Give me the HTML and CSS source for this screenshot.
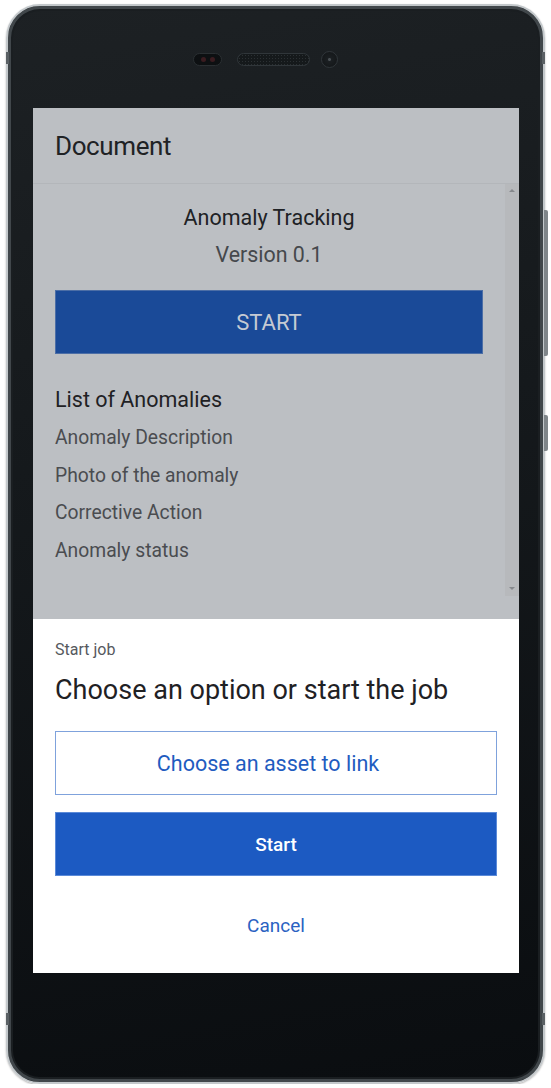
FILE: index.html
```html
<!DOCTYPE html>
<html lang="en">
<head>
  <meta charset="UTF-8" />
  <meta name="viewport" content="width=device-width, initial-scale=1" />
  <title>Document - Start job</title>
  <link rel="stylesheet" href="styles.css">
</head>
<body>
  <div class="phone">
    <span class="side-btn volume"></span>
    <span class="side-btn power"></span>
    <span class="notch left top"></span>
    <span class="notch right top"></span>
    <span class="notch left bottom"></span>
    <span class="notch right bottom"></span>

    <div class="topbar">
      <div class="sensor"><i></i><i></i></div>
      <div class="speaker"></div>
      <div class="camera"></div>
    </div>

    <div class="screen">
      <header class="doc-header">Document</header>

      <div class="scroll">
        <div class="doc-body">
          <h1 class="doc-title">Anomaly Tracking</h1>
          <p class="doc-version">Version 0.1</p>
          <button class="doc-start" type="button">START</button>
          <h2 class="list-title">List of Anomalies</h2>
          <ul class="list">
            <li>Anomaly Description</li>
            <li>Photo of the anomaly</li>
            <li>Corrective Action</li>
            <li>Anomaly status</li>
          </ul>
        </div>
        <div class="track">
          <span class="arrow up"></span>
          <span class="arrow down"></span>
        </div>
      </div>

      <div class="sheet">
        <p class="sheet-label">Start job</p>
        <h3 class="sheet-title">Choose an option or start the job</h3>
        <button class="btn outline" type="button">Choose an asset to link</button>
        <button class="btn primary" type="button">Start</button>
        <button class="btn link" type="button">Cancel</button>
      </div>
    </div>
  </div>
</body>
</html>
```

FILE: styles.css
```css
* {
  box-sizing: border-box;
}
body {
  margin: 0;
  background: #ffffff;
  font-family: Roboto, 'Noto Sans', Arial, sans-serif;
}
.phone {
  position: relative;
  width: 539px;
  height: 1080px;
  margin: 4px 0 0 6px;
  padding: 0 24px 0 25px;
  border: 2px solid #c3c8cb;
  border-radius: 34px;
  background: linear-gradient(170deg, #1d2124 0%, #15191c 40%, #0a0d10 100%);
  box-shadow: inset 0 0 0 3px #41474b, inset 0 0 0 5px #1a1e21, 0 1px 2px rgba(0,0,0,0.3);
  display: flex;
  flex-direction: column;
}
.side-btn {
  position: absolute;
  right: -5px;
  width: 4px;
  background: #7f8589;
  border-radius: 0 2px 2px 0;
}
.side-btn.volume {
  top: 204px;
  height: 146px;
}
.side-btn.power {
  top: 409px;
  height: 36px;
}
.notch {
  position: absolute;
  width: 3px;
  height: 12px;
  background: #5a6064;
}
.notch.left { left: -2px; }
.notch.right { right: -2px; }
.notch.top { top: 46px; }
.notch.bottom { top: 1007px; }

.topbar {
  height: 102px;
  padding: 4px 21px 0 0;
  display: flex;
  justify-content: center;
  align-items: center;
}
.sensor {
  width: 29px;
  height: 13px;
  border-radius: 7px;
  background: #0d1012;
  border: 1px solid #2a2f32;
  display: flex;
  justify-content: center;
  align-items: center;
  gap: 4px;
}
.sensor i {
  width: 5px;
  height: 5px;
  border-radius: 50%;
  background: #3a1c20;
}
.speaker {
  width: 73px;
  height: 13px;
  margin-left: 15px;
  border-radius: 7px;
  border: 1px solid #30363a;
  background-color: #15191b;
  background-image: radial-gradient(circle, #2b3033 0.8px, transparent 1px);
  background-size: 3px 3px;
}
.camera {
  width: 17px;
  height: 17px;
  margin-left: 11px;
  border-radius: 50%;
  border: 1px solid #30363a;
  background: radial-gradient(circle at 50% 50%, #4a5054 0 1px, #1b1f22 2px, #111416 100%);
}

.screen {
  width: 486px;
  height: 865px;
  background: #bcbfc3;
  display: flex;
  flex-direction: column;
}
.doc-header {
  height: 76px;
  padding-left: 22px;
  display: flex;
  align-items: center;
  font-size: 26px;
  letter-spacing: -0.4px;
  color: #202225;
  border-bottom: 1px solid #b3b6ba;
}
.scroll {
  height: 413px;
  display: flex;
}
.doc-body {
  flex: 1;
  padding: 20px 22px 0 22px;
}
.doc-title {
  margin: 0;
  font-size: 21.5px;
  font-weight: 400;
  line-height: 28px;
  text-align: center;
  color: #202225;
}
.doc-version {
  margin: 9px 0 0 0;
  font-size: 21.4px;
  line-height: 28px;
  text-align: center;
  color: #45484c;
}
.doc-start {
  display: block;
  width: 100%;
  height: 64px;
  margin-top: 21px;
  border: 1px solid #4c6ea6;
  background: #1a4a98;
  color: #c6cad3;
  font-family: inherit;
  font-size: 22px;
}
.list-title {
  margin: 32px 0 0 0;
  font-size: 21.5px;
  font-weight: 400;
  line-height: 28px;
  color: #1f2124;
}
.list {
  list-style: none;
  margin: 5px 0 0 0;
  padding: 0;
}
.list li {
  font-size: 19.3px;
  line-height: 37.5px;
  color: #4a4c50;
}
.track {
  position: relative;
  width: 14px;
  height: 412px;
  background: #b7b9bc;
}
.arrow {
  position: absolute;
  left: 4px;
  width: 0;
  height: 0;
  border-left: 3px solid transparent;
  border-right: 3px solid transparent;
}
.arrow.up {
  top: 5px;
  border-bottom: 3px solid #85888c;
}
.arrow.down {
  bottom: 6px;
  border-top: 3px solid #85888c;
}

.sheet {
  margin-top: auto;
  height: 354px;
  background: #ffffff;
  padding: 21px 22px 0 22px;
  display: flex;
  flex-direction: column;
}
.sheet-label {
  margin: 0;
  font-size: 16px;
  line-height: 20px;
  color: #56595e;
}
.sheet-title {
  margin: 14px 0 0 0;
  font-size: 27px;
  font-weight: 400;
  line-height: 32px;
  color: #1f2124;
}
.btn {
  width: 100%;
  height: 64px;
  font-family: inherit;
  cursor: pointer;
}
.btn.outline {
  margin-top: 25px;
  padding: 0 16px 0 0;
  border: 1px solid #7fa2dc;
  background: #ffffff;
  color: #1f5cc0;
  font-size: 21.5px;
}
.btn.primary {
  margin-top: 17px;
  border: 1px solid #5b8ad8;
  background: #1c5ac2;
  color: #ffffff;
  font-size: 19px;
  font-weight: 500;
}
.btn.link {
  height: 24px;
  margin-top: 37px;
  border: none;
  background: none;
  color: #2a62c2;
  font-size: 19px;
  line-height: 24px;
}
```
